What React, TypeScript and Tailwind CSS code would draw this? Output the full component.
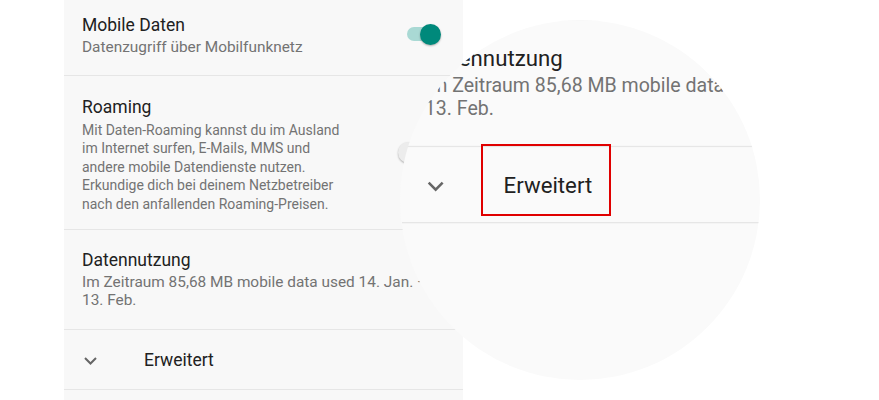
import React from "react";

function Switch({ on }: { on: boolean }) {
  return (
    <div className="relative h-[21px] w-[43px] shrink-0">
      <div
        className={`absolute left-[9px] top-[3.5px] h-[14px] w-[30px] rounded-full ${
          on ? "bg-[#a9d9d4]" : "bg-[#c8c8c8]"
        }`}
      />
      <div
        className={`absolute top-0 h-[21px] w-[21px] rounded-full shadow-[0_1px_2px_rgba(0,0,0,0.3)] ${
          on ? "left-[22px] bg-[#00897b]" : "left-0 bg-[#ececec]"
        }`}
      />
    </div>
  );
}

function SettingsList({ lens }: { lens?: boolean }) {
  return (
    <div
      className={`w-[399px] font-['Roboto',sans-serif] ${lens ? "bg-transparent" : "h-[400px] bg-[#f8f8f8]"}`}
    >
      {/* Mobile Daten */}
      <div className="flex h-[76px] items-start border-b border-[#e6e6e6] pl-[18px] pr-[22px]">
        <div className="flex-1 pt-[13px]">
          <div className="text-[17.5px] leading-[24px] text-[#212121]">Mobile Daten</div>
          <div className="text-[15.4px] leading-[20px] text-[#737373]">Datenzugriff über Mobilfunknetz</div>
        </div>
        <div className="mt-[23.5px]">
          <Switch on />
        </div>
      </div>

      {/* Roaming */}
      <div className="flex h-[154px] items-start border-b border-[#e6e6e6] pl-[18px] pr-[22px]">
        <div className="flex-1 pt-[18.5px]">
          <div className="text-[17.5px] leading-[24px] text-[#212121]">Roaming</div>
          <div className="mt-[2px] whitespace-nowrap text-[14px] leading-[18.5px] text-[#737373]">
            <div>Mit Daten-Roaming kannst du im Ausland</div>
            <div>im Internet surfen, E-Mails, MMS und</div>
            <div>andere mobile Datendienste nutzen.</div>
            <div>Erkundige dich bei deinem Netzbetreiber</div>
            <div>nach den anfallenden Roaming-Preisen.</div>
          </div>
        </div>
        <div className="self-center">
          <Switch on={false} />
        </div>
      </div>

      {/* Datennutzung */}
      <div className="h-[100px] border-b border-[#e6e6e6] pl-[18px] pt-[18px]">
        <div className="text-[17.5px] leading-[24px] text-[#212121]">Datennutzung</div>
        <div className="mt-[2px] w-[341px] overflow-hidden whitespace-nowrap text-[15.4px] leading-[17.5px] text-[#737373]">
          <div>Im Zeitraum 85,68 MB mobile data used 14. Jan. –</div>
          <div>13. Feb.</div>
        </div>
      </div>

      {/* Erweitert */}
      <div className="flex h-[60px] items-center border-b border-[#e6e6e6]">
        <svg width="16" height="10" viewBox="0 0 16 10" className="ml-[19px] mt-[2px]">
          <polyline points="2,2 7.5,7.5 13,2" fill="none" stroke="#666666" strokeWidth="2" />
        </svg>
        <span className="ml-[45px] text-[17.5px] leading-[24px] text-[#212121]">Erweitert</span>
      </div>
    </div>
  );
}

export default function App() {
  return (
    <div className="relative h-[400px] w-[879px] overflow-hidden bg-white">
      <div className="ml-[64px]">
        <SettingsList />
      </div>

      {/* magnifier lens */}
      <div
        aria-hidden
        className="pointer-events-none absolute left-[400px] top-[20px] h-[360px] w-[360px] overflow-hidden rounded-full bg-[#fafafa]"
      >
        <div className="absolute left-[2px] top-[-292px] origin-top-left scale-[1.27]">
          <SettingsList lens />
        </div>
        <div className="absolute left-[81px] top-[124px] h-[72px] w-[130px] border-2 border-[#e00000]" />
      </div>
    </div>
  );
}
